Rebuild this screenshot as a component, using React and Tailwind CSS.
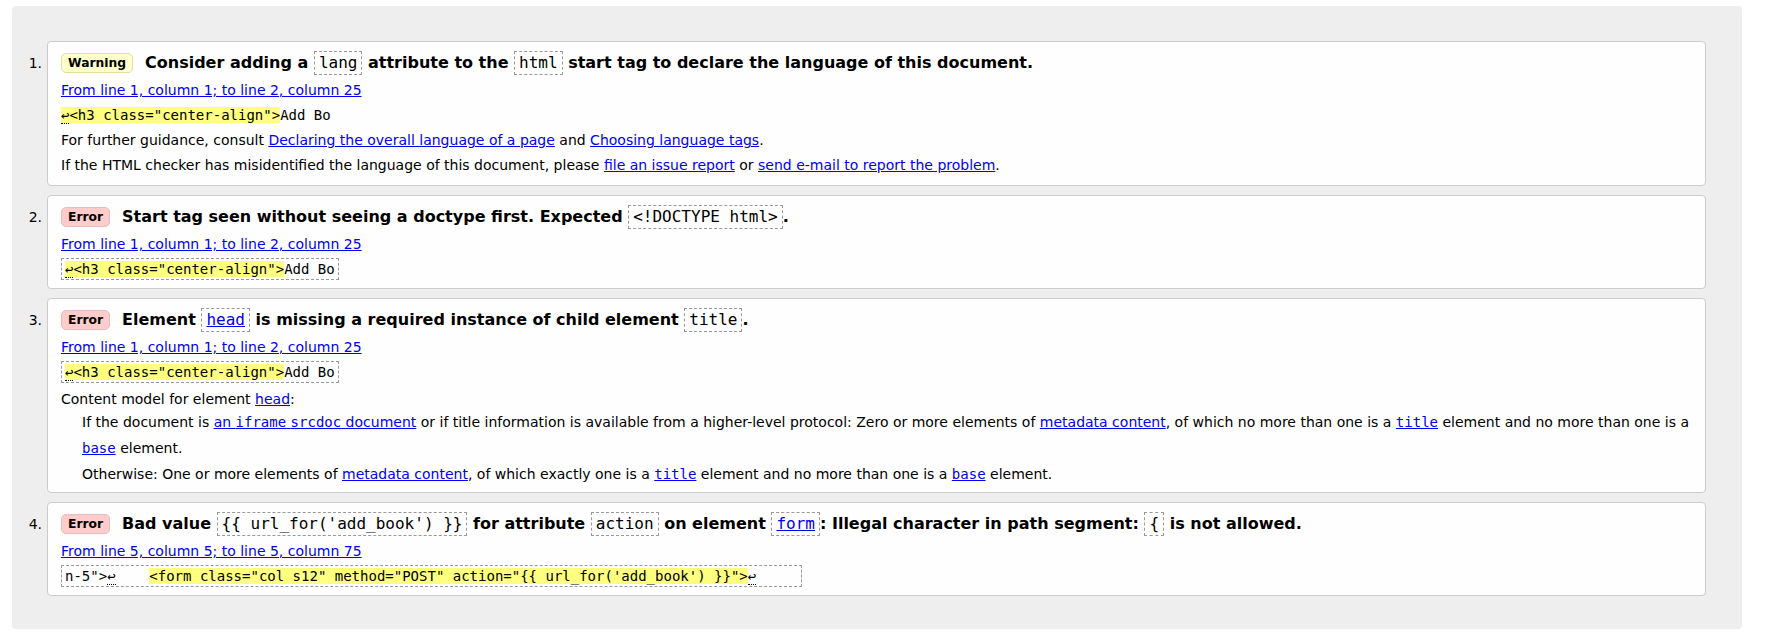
const sans = "font-['DejaVu_Sans','Liberation_Sans',sans-serif]"
const mono = "font-['DejaVu_Sans_Mono','Liberation_Mono',monospace]"

function Badge({ type }) {
  const warn = type === 'Warning'
  return (
    <span
      className={
        'inline-flex items-center h-[20px] px-[6px] border rounded-[5px] text-[12.3px] font-bold text-black ' +
        (warn ? 'bg-[#ffffcc] border-[#e2dfa6]' : 'bg-[#ffcccc] border-[#e6bcbc]')
      }
    >
      {type}
    </span>
  )
}

function A({ children }) {
  return <a href="#" className="text-[#0000ee] underline">{children}</a>
}

function C({ children }) {
  return <code className={mono + ' font-normal'}>{children}</code>
}

// dashed box used inside message titles
function Box({ children }) {
  return (
    <code className={mono + ' inline-block align-middle font-normal border border-dashed border-[#999] px-[4px] leading-[22px]'}>
      {children}
    </code>
  )
}

function Lf() {
  return <span className="border-b border-dotted border-black" title="Line break">↩</span>
}

function Mark({ children }) {
  return <mark className="bg-[#ffff80] text-black">{children}</mark>
}

function Extract({ children }) {
  return (
    <div className="mt-[4px] h-[22px]">
      <code className={mono + ' inline-block whitespace-pre border border-dashed border-[#999] px-[3px] py-[2px] text-[14px] leading-[16px]'}>
        {children}
      </code>
    </div>
  )
}

function Title({ type, children }) {
  return (
    <div className="flex items-center h-[24px]">
      <Badge type={type} />
      <span className="ml-[12px] text-[16px] font-bold leading-[24px] whitespace-nowrap">{children}</span>
    </div>
  )
}

function Line({ children }) {
  return <div className="mt-[5px] leading-[20px]">{children}</div>
}

function Item({ n, pb, children }) {
  return (
    <div className="flex mb-[9px] last:mb-0">
      <div className="w-[35px] shrink-0 pr-[5px] pt-[12px] text-right leading-[20px]">{n}.</div>
      <div className={'flex-1 bg-[#fefefe] border border-[#cccccc] rounded-[4px] pl-[13px] pr-[13px] pt-[9px] ' + pb}>
        {children}
      </div>
    </div>
  )
}

const loc1 = 'From line 1, column 1; to line 2, column 25'

export default function App() {
  return (
    <div className={sans + ' text-[14px] text-black bg-white min-h-screen pt-[6px] pl-[12px]'}>
      <div className="w-[1730px] bg-[#eeeeee] rounded-[4px] pt-[35px] pb-[33px] pr-[36px]">
        <Item n={1} pb="pb-[10px]">
          <Title type="Warning">
            Consider adding a <Box>lang</Box> attribute to the <Box>html</Box> start tag to declare the language of this document.
          </Title>
          <Line><A>{loc1}</A></Line>
          <Line>
            <code className={mono + ' whitespace-pre'}>
              <Mark><Lf />{'<h3 class="center-align">'}</Mark>Add Bo
            </code>
          </Line>
          <Line>
            For further guidance, consult <A>Declaring the overall language of a page</A> and <A>Choosing language tags</A>.
          </Line>
          <Line>
            If the HTML checker has misidentified the language of this document, please <A>file an issue report</A> or <A>send e-mail to report the problem</A>.
          </Line>
        </Item>

        <Item n={2} pb="pb-[8px]">
          <Title type="Error">
            Start tag seen without seeing a doctype first. Expected <Box>{'<!DOCTYPE html>'}</Box>.
          </Title>
          <Line><A>{loc1}</A></Line>
          <Extract>
            <Mark><Lf />{'<h3 class="center-align">'}</Mark>Add Bo
          </Extract>
        </Item>

        <Item n={3} pb="pb-[5px]">
          <Title type="Error">
            Element <Box><A>head</A></Box> is missing a required instance of child element <Box>title</Box>.
          </Title>
          <Line><A>{loc1}</A></Line>
          <Extract>
            <Mark><Lf />{'<h3 class="center-align">'}</Mark>Add Bo
          </Extract>
          <div className="mt-[6px] leading-[20px]">
            Content model for element <A>head</A>:
          </div>
          <div className="ml-[21px] leading-[26px]">
            If the document is <A>an <C>iframe</C> <C>srcdoc</C> document</A> or if title information is available from a higher-level protocol: Zero or more elements of <A>metadata content</A>, of which no more than one is a <A><C>title</C></A> element and no more than one is a <A><C>base</C></A> element.
          </div>
          <div className="ml-[21px] leading-[26px]">
            Otherwise: One or more elements of <A>metadata content</A>, of which exactly one is a <A><C>title</C></A> element and no more than one is a <A><C>base</C></A> element.
          </div>
        </Item>

        <Item n={4} pb="pb-[8px]">
          <Title type="Error">
            Bad value <Box>{"{{ url_for('add_book') }}"}</Box> for attribute <Box>action</Box> on element <Box><A>form</A></Box>: Illegal character in path segment: <Box>{'{'}</Box> is not allowed.
          </Title>
          <Line><A>From line 5, column 5; to line 5, column 75</A></Line>
          <Extract>
            {'n-5">'}<Lf />{'    '}<Mark>{'<form class="col s12" method="POST" action="{{ url_for(\'add_book\') }}">'}</Mark><Lf />{'     '}
          </Extract>
        </Item>
      </div>
    </div>
  )
}
